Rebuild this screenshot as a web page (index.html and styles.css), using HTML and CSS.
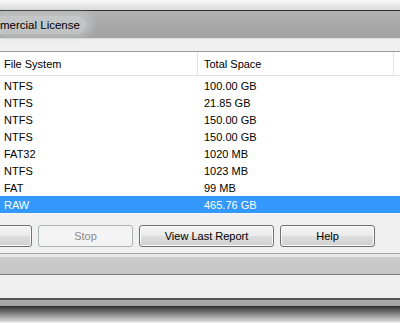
FILE: index.html
```html
<!DOCTYPE html>
<html lang="en">
<head>
    <meta charset="UTF-8">
    <title>Commercial License</title>
    <link rel="stylesheet" href="styles.css">
</head>
<body>
    <div class="frame-top"></div>
    <div class="titlebar">
        <span class="title">mercial License</span>
    </div>
    <div class="spacer"></div>

    <!-- Partition list -->
    <div class="list">
        <div class="list-head">
            <div class="col col-fs">File System</div>
            <div class="col col-size">Total Space</div>
            <div class="col col-rest"></div>
        </div>
        <div class="list-body">
            <div class="row"><span class="col-fs">NTFS</span><span class="col-size">100.00 GB</span></div>
            <div class="row"><span class="col-fs">NTFS</span><span class="col-size">21.85 GB</span></div>
            <div class="row"><span class="col-fs">NTFS</span><span class="col-size">150.00 GB</span></div>
            <div class="row"><span class="col-fs">NTFS</span><span class="col-size">150.00 GB</span></div>
            <div class="row"><span class="col-fs">FAT32</span><span class="col-size">1020 MB</span></div>
            <div class="row"><span class="col-fs">NTFS</span><span class="col-size">1023 MB</span></div>
            <div class="row"><span class="col-fs">FAT</span><span class="col-size">99 MB</span></div>
            <div class="row selected"><span class="col-fs">RAW</span><span class="col-size">465.76 GB</span></div>
        </div>
    </div>

    <div class="buttons">
        <button class="btn"></button>
        <button class="btn" disabled>Stop</button>
        <button class="btn wide">View Last Report</button>
        <button class="btn">Help</button>
    </div>

    <div class="status"></div>
    <div class="lower"></div>
    <div class="frame-bottom"></div>
</body>
</html>
```

FILE: styles.css
```css
body {
    margin: 0;
    width: 400px;
    height: 323px;
    overflow: hidden;
    background: #f0f0f0;
    font-family: "Liberation Sans", Arial, sans-serif;
    font-size: 11px;
    color: #000;
}

.frame-top {
    height: 10px;
    background: linear-gradient(#f8f8f8, #dadada);
}

.titlebar {
    height: 27px;
    border-top: 1px solid #2e2e2e;
    border-bottom: 1px solid #dcdcdc;
    background: linear-gradient(#b2b2b2, #a6a6a6 60%, #a2a2a2);
    display: flex;
    align-items: center;
}

.title {
    font-size: 11.5px;
    padding: 3px 6px 3px 0;
    border-radius: 0 10px 10px 0;
    background: rgba(215, 218, 222, 0.55);
    box-shadow: 2px 0 8px 4px rgba(215, 218, 222, 0.45);
}

.spacer {
    height: 12px;
}

.list {
    border-top: 1px solid #9c9c9c;
    background: #fff;
}

.list-head {
    display: flex;
    height: 23px;
    border-bottom: 1px solid #e3e3e3;
}

.list-head .col {
    display: flex;
    align-items: center;
    border-right: 1px solid #e3e3e3;
}

.col-fs {
    width: 193px;
    padding-left: 4px;
}

.col-size {
    width: 189px;
    padding-left: 6px;
}

.list-head .col-rest {
    border-right: none;
}

.list-body {
    padding-top: 1px;
}

.row {
    display: flex;
    align-items: center;
    height: 17px;
    padding-top: 1px;
    box-sizing: border-box;
}

.row .col-fs {
    width: 194px;
}

.row.selected {
    background: #3399ff;
    color: #fff;
}

.buttons {
    display: flex;
    gap: 6px;
    padding: 11px 0 6px;
    margin-left: -63px;
    border-top: 1px solid #f6f6f6;
}

.btn {
    width: 95px;
    height: 22px;
    padding: 0;
    font-family: inherit;
    font-size: 11px;
    color: #000;
    border: 1px solid #707070;
    border-radius: 3px;
    background: linear-gradient(#f3f3f3, #ebebeb 48%, #dddddd 52%, #cfcfcf);
    box-shadow: inset 0 0 0 1px #fbfbfb;
}

.btn.wide {
    width: 135px;
}

.btn:disabled {
    color: #8a8a8a;
    border-color: #adb2b5;
    background: #f4f4f4;
    box-shadow: none;
}

.status {
    height: 17px;
    border-top: 1px solid #a4a4a4;
    border-bottom: 1px solid #7a7a7a;
    background: linear-gradient(#e9e9e9 0, #e9e9e9 3px, #cbcbcb 3px, #c6c6c6);
    padding-top: 3px;
}

.lower {
    height: 23px;
    border-bottom: 2px solid #575757;
}

.frame-bottom {
    height: 22px;
    background: linear-gradient(#aaaaaa 0, #a4a4a4 6px, #222 6px, #3a3a3a 7px, #dcdcdc);
}
```
